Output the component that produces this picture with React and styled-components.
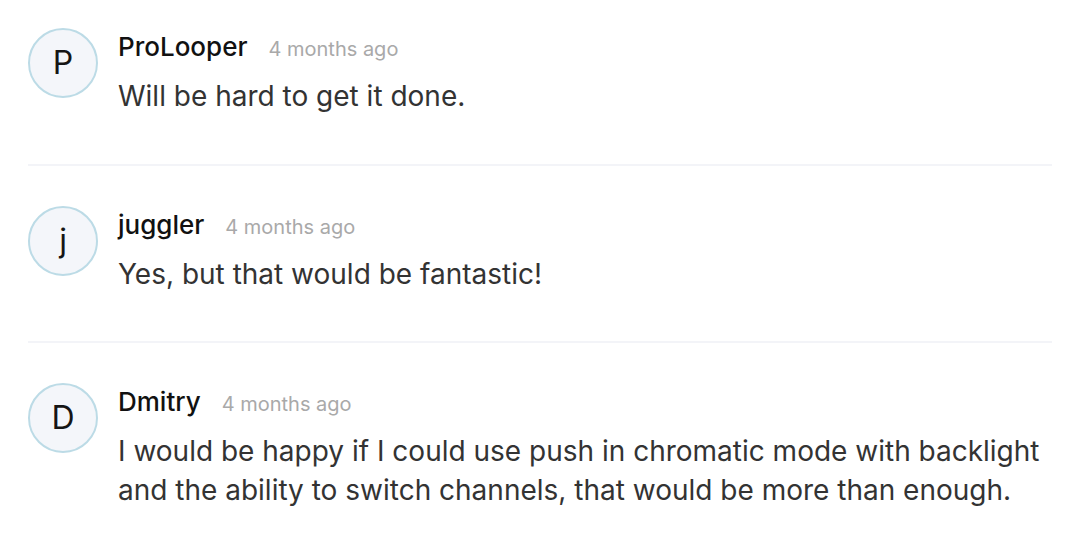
import React from "react";
import styled, { createGlobalStyle } from "styled-components";

const Global = createGlobalStyle`
  html, body { margin: 0; padding: 0; background: #ffffff; }
  body { font-family: Inter, "Noto Sans", sans-serif; -webkit-font-smoothing: antialiased; }
`;

const List = styled.div`
  padding: 0 34px 0 28px;
  display: flex;
  flex-direction: column;
`;

const Item = styled.div`
  display: flex;
  gap: 20px;
  align-items: flex-start;
  padding: ${(p) => (p.$first ? "28px" : "40px")} 0 48px;
  border-bottom: ${(p) => (p.$last ? "none" : "2px solid #f3f4f8")};
`;

const Avatar = styled.div`
  flex: 0 0 auto;
  width: 66px;
  height: 66px;
  border-radius: 50%;
  border: 2px solid #bcdbe6;
  background: #f4f6fa;
  display: flex;
  align-items: center;
  justify-content: center;
  font-size: 32px;
  color: #151515;
  line-height: 1;
`;

const Content = styled.div`
  flex: 1 1 auto;
  min-width: 0;
`;

const Header = styled.div`
  display: flex;
  align-items: baseline;
  gap: 21px;
  height: 38px;
  line-height: 38px;
  margin-bottom: 11px;
`;

const Name = styled.span`
  font-size: 26px;
  font-weight: 500;
  color: #111111;
`;

const Time = styled.span`
  font-size: 20px;
  color: #a9a9a9;
`;

const Body = styled.p`
  margin: 0;
  font-size: 28px;
  line-height: 38.5px;
  color: #333333;
`;

const comments = [
  { initial: "P", name: "ProLooper", time: "4 months ago", text: "Will be hard to get it done." },
  { initial: "j", name: "juggler", time: "4 months ago", text: "Yes, but that would be fantastic!" },
  {
    initial: "D",
    name: "Dmitry",
    time: "4 months ago",
    text: "I would be happy if I could use push in chromatic mode with backlight and the ability to switch channels, that would be more than enough.",
  },
];

export default function App() {
  return (
    <>
      <Global />
      <List>
        {comments.map((c, i) => (
          <Item key={i} $first={i === 0} $last={i === comments.length - 1}>
            <Avatar>{c.initial}</Avatar>
            <Content>
              <Header>
                <Name>{c.name}</Name>
                <Time>{c.time}</Time>
              </Header>
              <Body>{c.text}</Body>
            </Content>
          </Item>
        ))}
      </List>
    </>
  );
}
